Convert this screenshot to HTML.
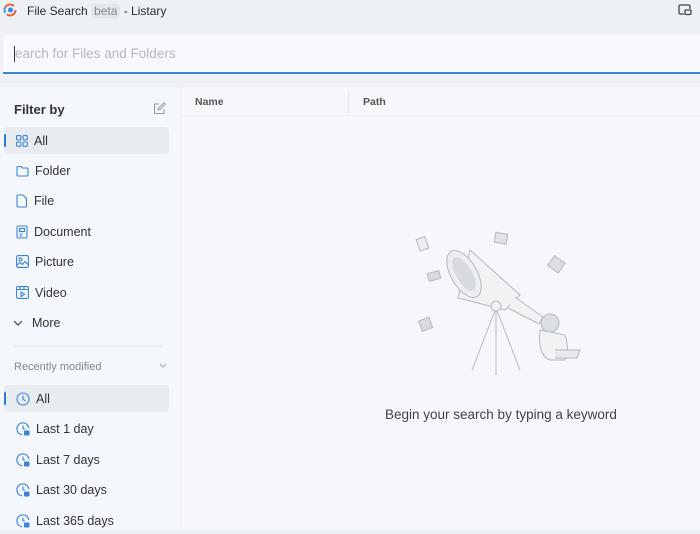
<!DOCTYPE html><html><head><style>
*{margin:0;padding:0;box-sizing:border-box}
body{width:700px;height:530px;overflow:hidden;background:#edf1f6;font-family:"Liberation Sans",sans-serif;color:#2b2b2b;position:relative}
.abs{position:absolute}
.t{font-size:12px}
.item{position:absolute;left:4px;width:165px;height:27px;display:flex;align-items:center;font-size:12.5px;color:#333}
.item svg{margin-left:12px;margin-right:6px}
.sel{background:#e8ebf0;border-radius:4px}
.sel:before{content:"";position:absolute;left:0;top:7px;width:2px;height:13px;background:#2f7ad6;border-radius:1px}
</style></head><body>
<svg class="abs" style="left:3px;top:3px" width="14" height="14" viewBox="0 0 14 14"><circle cx="7" cy="7" r="5.5" fill="none" stroke="#e8663b" stroke-width="2" stroke-dasharray="12 6"/><circle cx="7" cy="7" r="5.5" fill="none" stroke="#4ba3e3" stroke-width="2" stroke-dasharray="6 30" stroke-dashoffset="-14"/><circle cx="7.5" cy="7" r="2.5" fill="#3d8be0"/></svg>
<div class="abs t" style="left:27px;top:4px">File Search <span style="background:#e3e6ea;color:#888;padding:0 3px;border-radius:3px">beta</span> - Listary</div>
<svg class="abs" style="left:678px;top:4px" width="14" height="12" viewBox="0 0 14 12"><path d="M6 10H2.5Q1 10 1 8.5V2.5Q1 1 2.5 1h8Q12 1 12 2.5V5" fill="none" stroke="#444" stroke-width="1.3"/><rect x="7" y="6" width="6" height="4.5" rx="1" fill="none" stroke="#444" stroke-width="1.3"/></svg>
<div class="abs" style="left:3px;top:35px;width:697px;height:39px;background:#f7f9fc;border-bottom:2px solid #3a86d4;border-radius:4px 0 0 0"></div>
<div class="abs" style="left:14px;top:46px;width:1px;height:16px;background:#333"></div>
<div class="abs" style="left:15px;top:46px;font-size:13.5px;color:#b4b8bf">earch for Files and Folders</div>
<div class="abs" style="left:0;top:87px;width:180px;height:443px;background:#f4f7fb;border-radius:0 4px 0 0"></div>
<div class="abs" style="left:181px;top:87px;width:519px;height:443px;background:#f5f7fb;border-radius:4px 0 0 0"></div>
<div class="abs" style="left:181px;top:115px;width:519px;height:1px;background:#edf0f4"></div>
<div class="abs" style="left:348px;top:91px;width:1px;height:22px;background:#e3e6eb"></div>
<div class="abs" style="left:195px;top:96px;font-size:10.5px;font-weight:bold;color:#555">Name</div>
<div class="abs" style="left:363px;top:96px;font-size:10.5px;font-weight:bold;color:#555">Path</div>
<div class="abs" style="left:14px;top:102px;font-size:13px;font-weight:bold;color:#333">Filter by</div>
<svg class="abs" style="left:153px;top:102px" width="13" height="13" viewBox="0 0 13 13" fill="none" stroke="#999" stroke-width="1"><path d="M11 7v4.5H1.5V2H6"/><path d="M5 8l.5-2L11 .8l1.2 1.2L7 7.5z"/></svg>
<div class="item sel" style="top:127px"><svg width="12" height="12" viewBox="0 0 12 12" fill="none" stroke="#3b83d8" stroke-width="1.1"><rect x=".6" y=".6" width="4.3" height="4.3" rx="1"/><rect x="7" y=".6" width="4.3" height="4.3" rx="1"/><rect x=".6" y="7" width="4.3" height="4.3" rx="1"/><rect x="7" y="7" width="4.3" height="4.3" rx="1"/></svg>All</div>
<div class="item" style="top:157px"><svg width="13" height="12" viewBox="0 0 13 12" fill="none" stroke="#3b83d8" stroke-width="1.1"><path d="M1 2.5Q1 1.5 2 1.5h3l1.3 1.5H11q1 0 1 1V10q0 1-1 1H2q-1 0-1-1z"/></svg>Folder</div>
<div class="item" style="top:187px"><svg width="12" height="14" viewBox="0 0 12 14" fill="none" stroke="#3b83d8" stroke-width="1.1"><path d="M2 1h5l3.5 3.5V12q0 1-1 1H2q-1 0-1-1V2q0-1 1-1z"/></svg>File</div>
<div class="item" style="top:218px"><svg width="12" height="14" viewBox="0 0 12 14" fill="none" stroke="#3b83d8" stroke-width="1.1"><rect x="1" y="1" width="10" height="12" rx="1.5"/><rect x="3.5" y="3.5" width="5" height="3"/><path d="M3.5 9h3M3.5 11h3"/></svg>Document</div>
<div class="item" style="top:248px"><svg width="13" height="13" viewBox="0 0 13 13" fill="none" stroke="#3b83d8" stroke-width="1.1"><rect x=".6" y=".6" width="11.8" height="11.8" rx="1.5"/><circle cx="4.5" cy="4.5" r="1.5"/><path d="M1 10l3-2.5 2.5 2 2.5-3 3.5 3.5"/></svg>Picture</div>
<div class="item" style="top:279px"><svg width="13" height="13" viewBox="0 0 13 13" fill="none" stroke="#3b83d8" stroke-width="1.1"><rect x=".6" y=".6" width="11.8" height="11.8" rx="1.5"/><path d="M1 3.5h11M4 1v2.5M8 1v2.5"/><path d="M5 6v4.5l3.5-2.2z"/></svg>Video</div>
<div class="item" style="top:309px"><svg width="12" height="12" viewBox="0 0 12 12" fill="none" stroke="#444" stroke-width="1.2" style="margin-left:8px;margin-right:8px"><path d="M2 4l4 4 4-4"/></svg>More</div>
<div class="abs" style="left:14px;top:346px;width:148px;height:1px;background:#e4e7ec"></div>
<div class="abs" style="left:14px;top:361px;font-size:11px;color:#888">Recently modified</div>
<svg class="abs" style="left:159px;top:363px" width="8" height="6" viewBox="0 0 8 6" fill="none" stroke="#aaa"><path d="M1 1l3 3 3-3"/></svg>
<div class="item sel" style="top:385px"><svg width="14" height="14" viewBox="0 0 14 14" fill="none" stroke="#3b83d8" stroke-width="1.1"><circle cx="7" cy="7" r="6"/><path d="M7 3.5V7l2.5 2"/></svg>All</div>
<div class="item" style="top:415px"><svg width="14" height="14" viewBox="0 0 14 14" fill="none" stroke="#3b83d8" stroke-width="1.1"><path d="M12.8 6A6 6 0 1 0 6 12.8"/><path d="M7 3.5V7h2"/><rect x="8" y="8.5" width="5.5" height="5" fill="#3b83d8" stroke="none" rx="1"/></svg>Last 1 day</div>
<div class="item" style="top:446px"><svg width="14" height="14" viewBox="0 0 14 14" fill="none" stroke="#3b83d8" stroke-width="1.1"><path d="M12.8 6A6 6 0 1 0 6 12.8"/><path d="M7 3.5V7h2"/><rect x="8" y="8.5" width="5.5" height="5" fill="#3b83d8" stroke="none" rx="1"/></svg>Last 7 days</div>
<div class="item" style="top:476px"><svg width="14" height="14" viewBox="0 0 14 14" fill="none" stroke="#3b83d8" stroke-width="1.1"><path d="M12.8 6A6 6 0 1 0 6 12.8"/><path d="M7 3.5V7h2"/><rect x="8" y="8.5" width="5.5" height="5" fill="#3b83d8" stroke="none" rx="1"/></svg>Last 30 days</div>
<div class="item" style="top:507px"><svg width="14" height="14" viewBox="0 0 14 14" fill="none" stroke="#3b83d8" stroke-width="1.1"><path d="M12.8 6A6 6 0 1 0 6 12.8"/><path d="M7 3.5V7h2"/><rect x="8" y="8.5" width="5.5" height="5" fill="#3b83d8" stroke="none" rx="1"/></svg>Last 365 days</div>
<svg class="abs" style="left:400px;top:220px" width="200" height="160" viewBox="0 0 200 160" fill="none" stroke="#b4b8bd" stroke-width="1">
<rect x="18" y="18" width="9" height="12" fill="#eceef1" transform="rotate(-20 22 24)"/>
<rect x="95" y="13" width="12" height="10" fill="#e0e2e5" transform="rotate(10 100 18)"/>
<rect x="150" y="38" width="13" height="12" fill="#dcdee2" transform="rotate(35 156 44)"/>
<rect x="28" y="52" width="12" height="8" fill="#d8dade" transform="rotate(-15 34 56)"/>
<rect x="20" y="99" width="11" height="11" fill="#d8dade" transform="rotate(-20 25 104)"/>
<path d="M70 30 L120 75 L105 90 L58 78 Z" fill="#f0f2f4"/>
<ellipse cx="64" cy="54" rx="13" ry="26" transform="rotate(-30 64 54)" fill="#eceef1"/>
<ellipse cx="64" cy="54" rx="8" ry="19" transform="rotate(-30 64 54)" fill="#d8dbde" stroke="none"/>
<path d="M115 77 L143 97 L139 104 L108 88" fill="#f0f2f4"/>
<path d="M96 88 L72 150 M96 88 L96 155 M96 88 L120 150"/>
<circle cx="96" cy="86" r="5" fill="#f0f2f4"/>
<circle cx="150" cy="103" r="9" fill="#dcdfe2"/>
<path d="M140 110 q-3 25 10 30 h15 q5-10 0-25 z" fill="#f0f2f4"/>
<path d="M155 130 h25 l-3 8 h-22" fill="#e6e8eb"/>
</svg>
<div class="abs" style="left:385px;top:407px;font-size:13.5px;color:#444">Begin your search by typing a keyword</div>
</body></html>
